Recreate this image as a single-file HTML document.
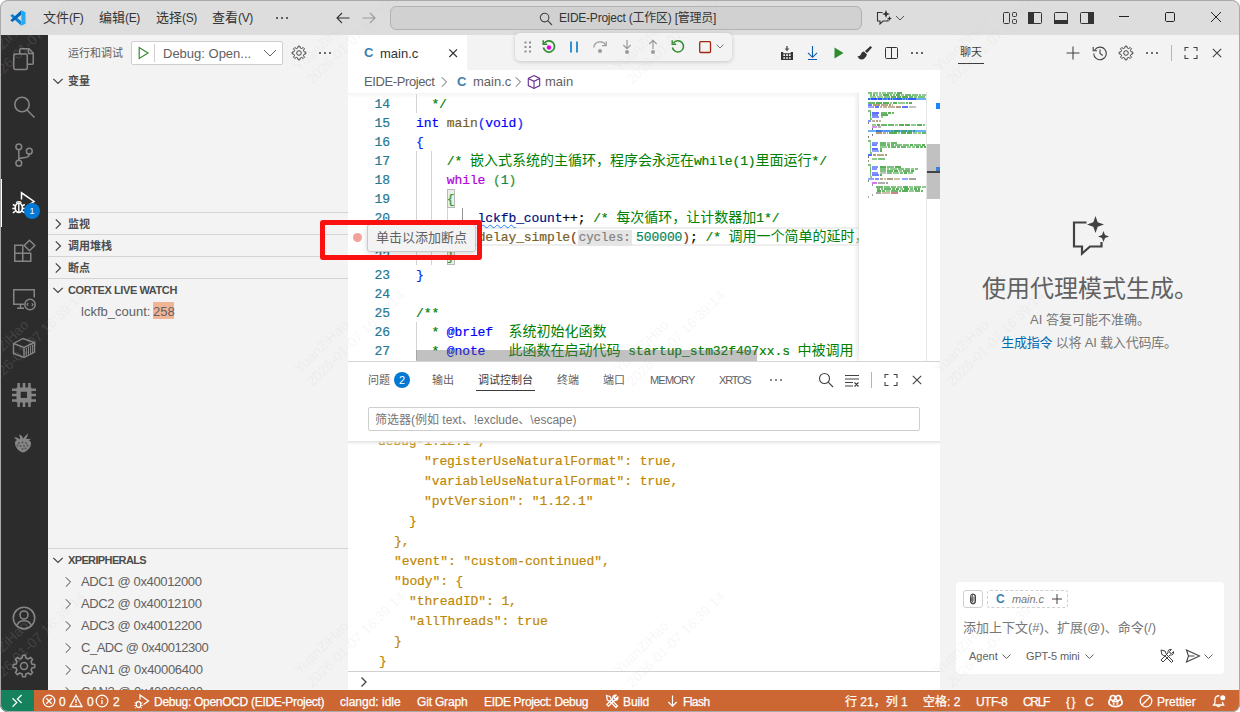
<!DOCTYPE html>
<html lang="zh-CN">
<head>
<meta charset="utf-8">
<title>EIDE-Project</title>
<style>
*{box-sizing:border-box;margin:0;padding:0}
html,body{width:1240px;height:712px;overflow:hidden;background:#fff}
body{font-family:"Liberation Sans","Noto Sans CJK SC",sans-serif;font-size:13px;color:#616161;position:relative}
.abs{position:absolute}
#win{position:absolute;left:0;top:0;width:1240px;height:712px;border-radius:8px;overflow:hidden;background:#dddddd}
#winborder{position:absolute;left:0;top:0;width:1240px;height:712px;border-radius:8px;border:1px solid #a9a9a9;z-index:50;pointer-events:none}
svg{display:block;overflow:visible}
.ic{position:absolute}
.t{position:absolute;white-space:nowrap;line-height:1}
.wm{position:absolute;font-size:14px;line-height:18px;color:rgba(202,202,202,.16);white-space:nowrap;transform-origin:0 0;transform:translateY(-18px) rotate(-44deg)}
/* title bar */
#title{left:0;top:0;width:1240px;height:35px;background:#dddddd}
#title .m{top:11px;font-size:13px;color:#333}
#cmd{left:390px;top:6px;width:472px;height:24px;border-radius:6px;background:#d1d1d1;border:1px solid #b2b2b2}
.l{font-size:12px;letter-spacing:-.35px}
/* activity bar */
#act{left:0;top:35px;width:48px;height:655px;background:#2c2c2c}
/* sidebar */
#side{left:48px;top:35px;width:300px;height:655px;background:#f3f3f3}
.hdr{position:absolute;left:0;width:300px;height:22px;border-top:1px solid #d4d4d4}
.hdr .t{left:20px;top:6px;font-size:11px;font-weight:bold;color:#4d4d4d}
.row{position:absolute;left:0;width:300px;height:22px}
.row .t{top:4px;font-size:13px;color:#616161}
/* editor */
#ed{left:348px;top:35px;width:592px;height:327px;background:#fff}
#tabs{left:0;top:0;width:592px;height:35px;background:#f3f3f3}
#tab{left:0;top:0;width:119px;height:35px;background:#fff}
#crumbs{left:0;top:35px;width:592px;height:22px;background:#fff}
#code{left:0;top:57px;width:592px;height:270px;background:#fff;overflow:hidden}
.ln{position:absolute;left:0;width:42px;text-align:right;font-family:"Liberation Mono",monospace;font-size:13px;letter-spacing:-0.1px;color:#237893;line-height:19px;height:19px}
.cl{position:absolute;left:68px;font-family:"Liberation Mono","Noto Sans CJK SC",monospace;font-size:13px;letter-spacing:-0.1px;color:#000;line-height:19px;height:19px;white-space:pre}
.cl .cj{font-size:14px;letter-spacing:0;-webkit-text-stroke:0}
.cl,.ln,.con{-webkit-text-stroke:.2px}
.cm{color:#008000}.kw{color:#0000ff}.fn{color:#795e26}.ct{color:#af00db}.nu{color:#098658}.vr{color:#001080}.b1{color:#0431fa}.b2{color:#319331}.b3{color:#7b3814}
.hint{font-size:12.400px;letter-spacing:0;font-family:"Liberation Mono",monospace;background:#e5e5e5;color:#828282;padding:1px 1px 1px 1px;margin-right:4.300px}
.hl{background:transparent}
.bm{}
.sq{text-decoration:underline wavy #1a85ff;text-decoration-thickness:1px;text-underline-offset:2px}
/* panel */
#panel{left:348px;top:361px;width:592px;height:329px;background:#fff;border-top:1px solid #d4d4d4}
.con{position:absolute;font-family:"Liberation Mono",monospace;font-size:13px;letter-spacing:-0.1px;color:#bf8803;line-height:20px;white-space:pre}
/* chat */
#chat{left:940px;top:35px;width:300px;height:655px;background:#f3f3f3}
/* status */
#status{left:0;top:690px;width:1240px;height:22px;background:#cc6633;color:#fff}
#status .t{top:6px;font-size:12px;color:#fff;-webkit-text-stroke:.25px #fff}
</style>
</head>
<body>
<div id="win">
<!-- TITLE BAR -->
<div id="title" class="abs">
  <svg class="ic" style="left:10px;top:10px" width="16" height="16" viewBox="0 0 100 100"><path d="M71 98 L71 70 L15 25 L2 36 Z" fill="#0a84d8"/><path d="M71 2 L71 30 L15 75 L2 64 Z" fill="#0066b8"/><path d="M71 2 L97 14 V86 L71 98 Z" fill="#23a9f2"/></svg>
  <span class="t m" style="left:43px">文件<span class="l">(F)</span></span>
  <span class="t m" style="left:99px">编辑<span class="l">(E)</span></span>
  <span class="t m" style="left:156px">选择<span class="l">(S)</span></span>
  <span class="t m" style="left:212px">查看<span class="l">(V)</span></span>
  <svg class="ic" style="left:274px;top:10px" width="16" height="16" viewBox="0 0 16 16" fill="#333"><circle cx="3" cy="8" r="1"/><circle cx="8" cy="8" r="1"/><circle cx="13" cy="8" r="1"/></svg>
  <svg class="ic" style="left:335px;top:10px" width="16" height="16" viewBox="0 0 16 16" fill="none" stroke="#333" stroke-width="1.1"><path d="M14.5 8H2M7 3L2 8l5 5"/></svg>
  <svg class="ic" style="left:361px;top:10px" width="16" height="16" viewBox="0 0 16 16" fill="none" stroke="#9a9a9a" stroke-width="1.1"><path d="M1.5 8H14M9 3l5 5-5 5"/></svg>
  <div id="cmd" class="abs"></div>
  <svg class="ic" style="left:539px;top:12px" width="14" height="14" viewBox="0 0 14 14" fill="none" stroke="#444" stroke-width="1.1"><circle cx="5.6" cy="5.6" r="4.3"/><path d="M8.7 8.7L13 13"/></svg>
  <span class="t" style="left:559px;top:12px;font-size:12px;color:#333;letter-spacing:-0.23px">EIDE-Project (工作区) [管理员]</span>
  <svg class="ic" style="left:876px;top:10px" width="16" height="16" viewBox="0 0 16 16" fill="none" stroke="#333" stroke-width="1.100"><path d="M6.500 2.500H1.500v8.500h2.500v3l3-3h5V9.500"/><path d="M10 0l1.100 2.900 2.900 1.100-2.900 1.100L10 8 8.900 5.100 6 4l2.900-1.100z M13.500 6l.7 1.800 1.800.7-1.800.7-.7 1.800-.7-1.800-1.800-.7 1.800-.7z" fill="#333" stroke="none"/></svg>
  <svg class="ic" style="left:895px;top:13px" width="10" height="10" viewBox="0 0 10 10" fill="none" stroke="#555" stroke-width="1"><path d="M1 3l4 4 4-4"/></svg>
  <svg class="ic" style="left:1002px;top:10px" width="16" height="16" viewBox="0 0 16 16" fill="none" stroke="#333" stroke-width="1"><rect x="1.500" y="2.500" width="6" height="11" rx="1"/><rect x="10.500" y="2.500" width="4" height="4" rx="1"/><rect x="10.500" y="9.500" width="4" height="4" rx="1"/></svg>
  <svg class="ic" style="left:1027px;top:10px" width="16" height="16" viewBox="0 0 16 16"><rect x="1.500" y="2.500" width="13" height="11" rx="1" fill="none" stroke="#333"/><rect x="1" y="2" width="6" height="12" fill="#333"/></svg>
  <svg class="ic" style="left:1053px;top:10px" width="16" height="16" viewBox="0 0 16 16"><rect x="1.500" y="2.500" width="13" height="11" rx="1" fill="none" stroke="#333"/><rect x="1" y="10" width="14" height="4" fill="#333"/></svg>
  <svg class="ic" style="left:1079px;top:10px" width="16" height="16" viewBox="0 0 16 16"><rect x="1.500" y="2.500" width="13" height="11" rx="1" fill="none" stroke="#333"/><rect x="9" y="2" width="6" height="12" fill="#333"/></svg>
  <svg class="ic" style="left:1119px;top:12px" width="10" height="10" viewBox="0 0 10 10" stroke="#222" stroke-width="1" fill="none"><path d="M0 4.500h10"/></svg>
  <svg class="ic" style="left:1165px;top:12px" width="10" height="10" viewBox="0 0 10 10" stroke="#222" stroke-width="1" fill="none"><rect x=".5" y=".5" width="9" height="9" rx="1.200"/></svg>
  <svg class="ic" style="left:1211px;top:12px" width="10" height="10" viewBox="0 0 10 10" stroke="#222" stroke-width="1" fill="none"><path d="M0 0l10 10M10 0L0 10"/></svg>
</div>
<!-- ACTIVITY BAR -->
<div id="act" class="abs">
  <div class="abs" style="left:0;top:144px;width:2px;height:48px;background:#fff"></div>
  <svg class="ic" style="left:12px;top:12px" width="24" height="24" viewBox="0 0 24 24" fill="none" stroke="#858585" stroke-width="1.5"><path d="M7.750 6.500V2.750a1 1 0 0 1 1-1h8.200l4.300 4.300v10.200a1 1 0 0 1-1 1H16"/><path d="M16.500 1.750v4.800h4.700"/><rect x="1.750" y="7" width="13.500" height="15.500" rx="1.500"/></svg>
  <svg class="ic" style="left:12px;top:60px" width="24" height="24" viewBox="0 0 24 24" fill="none" stroke="#858585" stroke-width="1.600"><circle cx="10" cy="9.500" r="7.200"/><path d="M15 15l7.500 7.500"/></svg>
  <svg class="ic" style="left:12px;top:108px" width="24" height="24" viewBox="0 0 24 24" fill="none" stroke="#858585" stroke-width="1.500"><circle cx="6.800" cy="3.800" r="2.900"/><circle cx="6.800" cy="20.200" r="2.900"/><circle cx="17.300" cy="8.200" r="2.900"/><path d="M6.800 6.700v10.600M17.300 11.100c0 3.500-3 3.600-6 3.600-2.500 0-4.500 1-4.500 2.600"/></svg>
  <svg class="ic" style="left:12px;top:156px" width="24" height="24" viewBox="0 0 24 24" fill="none" stroke="#fff" stroke-width="1.500"><path d="M9.500 8.500V1.800l12.500 8.700-7.500 5.200"/><ellipse cx="6.800" cy="16.800" rx="3.600" ry="4.700" stroke-width="1.700"/><path d="M6.800 12.500v9M.8 13.500l2.700 1.300M12.800 13.500l-2.700 1.300M.3 17.500h3M13.300 17.500h-3M.8 21.800l2.700-1.600M12.800 21.800l-2.700-1.600M4.300 11.800c.5-1.600 4.500-1.600 5 0" stroke-width="1.400"/></svg>
  <div class="abs" style="left:24px;top:168px;width:16px;height:16px;border-radius:8px;background:#0078d4;color:#fff;font-size:9px;text-align:center;line-height:16px">1</div>
  <svg class="ic" style="left:12px;top:204px" width="24" height="24" viewBox="0 0 24 24" fill="none" stroke="#858585" stroke-width="1.500"><path d="M2.750 6.250h8v8h-8zM2.750 14.250h8v8h-8zM10.750 14.250h8v8h-8z"/><path d="M17.500 1.200l5.300 5.300-5.300 5.300-5.300-5.300z"/></svg>
  <svg class="ic" style="left:12px;top:252px" width="24" height="24" viewBox="0 0 24 24" fill="none" stroke="#858585" stroke-width="1.500"><path d="M12 17.250H1.750V2.750h20.500V10.500"/><path d="M5 21.250h7M8.500 17.500v3.500"/><circle cx="18" cy="17.500" r="5.200"/><path d="M16.300 15.800l-1.400 1.500 1.400 1.500M19.700 16.200l1.400 1.500-1.400 1.500" stroke-width="1.100"/></svg>
  <svg class="ic" style="left:12px;top:300px" width="24" height="24" viewBox="0 0 24 24" fill="none" stroke="#858585" stroke-width="1.400"><path d="M1.500 8.500L11 3.500l11.500 4v9.500L12 22.500l-10.500-4z"/><path d="M1.500 8.500L12 12.500l10.500-5M12 12.500v10"/><path d="M14.300 12.800v8M16.500 11.800v8M18.600 10.900v8M20.600 10v8" stroke-width="1"/></svg>
  <svg class="ic" style="left:12px;top:348px" width="24" height="24" viewBox="0 0 24 24" fill="#858585"><path d="M4.500 4.500h15v15h-15z M8.700 8.700v6.300h6.300V8.700z" fill-rule="evenodd"/><path d="M5.400 0h2.500v5h-2.500zM10.700 0h2.600v5h-2.600zM16.200 0h2.500v5h-2.500zM5.400 19h2.500v5h-2.500zM10.700 19h2.600v5h-2.600zM16.200 19h2.500v5h-2.500zM0 5.400h5v2.500H0zM0 10.700h5v2.600H0zM0 16.200h5v2.500H0zM19 5.400h5v2.500h-5zM19 10.700h5v2.600h-5zM19 16.200h5v2.500h-5z"/></svg>
  <svg class="ic" style="left:13px;top:398px" width="20" height="20" viewBox="0 0 20 20" fill="#858585"><path d="M1 4.500c2.500-.3 4.500.3 6 2-.2-2 .3-3.500-1.300-5C8.500 2 9.800 3.500 10 5.800 11.200 4 12.800 2.500 14.800.5c.2 2-.6 3.800-2.300 5.400 2-.3 3.500 0 5.500.6-1.500.8-3 1.500-5 1.500H6.500C4.500 7.500 2.500 6.500 1 4.500z"/><path d="M2.500 8c2-1.600 4.500-1.800 7-1.500 3-.4 6 0 8 2 1.200 2.500.3 5.200-1.800 7.500-1.800 1.800-3.500 2.800-5.700 3.500-2.500-.6-4.500-2-6-4C2 13 1.500 10.200 2.500 8z"/><g fill="#2c2c2c" opacity=".55"><circle cx="6" cy="10" r=".9"/><circle cx="9.500" cy="9.500" r=".9"/><circle cx="13" cy="10" r=".9"/><circle cx="7.500" cy="13" r=".9"/><circle cx="11" cy="13" r=".9"/><circle cx="14.500" cy="12.500" r=".9"/><circle cx="9.500" cy="16" r=".9"/><circle cx="12.500" cy="15.500" r=".9"/><circle cx="4.500" cy="12.500" r=".9"/></g></svg>
  <svg class="ic" style="left:12px;top:571px" width="24" height="24" viewBox="0 0 24 24" fill="none" stroke="#858585" stroke-width="1.600"><circle cx="12" cy="12" r="10.700"/><circle cx="12" cy="9" r="4"/><path d="M4.800 19.500c1.200-3.300 4-4.800 7.200-4.800s6 1.500 7.200 4.800"/></svg>
  <svg class="ic" style="left:12px;top:619px" width="24" height="24" viewBox="0 0 24 24" fill="none" stroke="#858585" stroke-width="1.600" stroke-linejoin="round"><path d="M10.090 4.030 L10.560 1.300 L13.440 1.300 L13.910 4.030 L16.280 5.010 L18.550 3.410 L20.590 5.450 L18.990 7.720 L19.970 10.090 L22.700 10.560 L22.700 13.440 L19.970 13.910 L18.990 16.280 L20.590 18.550 L18.550 20.590 L16.280 18.990 L13.910 19.970 L13.440 22.700 L10.560 22.700 L10.090 19.970 L7.720 18.990 L5.450 20.590 L3.410 18.550 L5.010 16.280 L4.030 13.910 L1.300 13.440 L1.300 10.560 L4.030 10.090 L5.010 7.720 L3.410 5.450 L5.450 3.410 L7.720 5.010Z"/><circle cx="12" cy="12" r="3.500"/></svg>
</div>
<!-- SIDEBAR -->
<div id="side" class="abs">
  <span class="t" style="left:20px;top:13px;font-size:11px;color:#616161">运行和调试</span>
  <div class="abs" style="left:83px;top:6px;width:152px;height:24px;background:#fff;border:1px solid #cecece;border-radius:2px"></div>
  <svg class="ic" style="left:87px;top:10px" width="16" height="16" viewBox="0 0 16 16" fill="none" stroke="#388a34" stroke-width="1.200"><path d="M4.200 2.500v11L13 8z"/></svg>
  <div class="abs" style="left:106px;top:9px;width:1px;height:18px;background:#d0d0d0"></div>
  <span class="t" style="left:115px;top:12px;font-size:13px;color:#616161">Debug: Open...</span>
  <svg class="ic" style="left:214px;top:10px" width="16" height="16" viewBox="0 0 16 16" fill="none" stroke="#616161" stroke-width="1"><path d="M2 5l6 6 6-6"/></svg>
  <svg class="ic" style="left:243px;top:10px" width="16" height="16" viewBox="0 0 16 16" fill="none" stroke="#424242" stroke-width="1" stroke-linejoin="round"><path d="M6.790 2.940 L7.080 1.160 L8.920 1.160 L9.210 2.940 L10.720 3.570 L12.190 2.510 L13.490 3.810 L12.430 5.280 L13.060 6.790 L14.840 7.080 L14.840 8.920 L13.060 9.210 L12.430 10.720 L13.490 12.190 L12.190 13.490 L10.720 12.430 L9.210 13.060 L8.920 14.840 L7.080 14.840 L6.790 13.060 L5.280 12.430 L3.810 13.490 L2.510 12.190 L3.570 10.720 L2.940 9.210 L1.160 8.920 L1.160 7.080 L2.940 6.790 L3.570 5.280 L2.510 3.810 L3.810 2.510 L5.280 3.570Z"/><circle cx="8" cy="8" r="2.300"/></svg>
  <svg class="ic" style="left:269px;top:10px" width="16" height="16" viewBox="0 0 16 16" fill="#424242"><circle cx="3" cy="8" r="1"/><circle cx="8" cy="8" r="1"/><circle cx="13" cy="8" r="1"/></svg>
  <div class="hdr" style="top:35px;border-top:none;"><svg class="ic" style="left:2px;top:3px" width="16" height="16" viewBox="0 0 16 16" fill="none" stroke="#424242" stroke-width="1.200"><path d="M3.300 5.800L8 10.500l4.700-4.700"/></svg><span class="t">变量</span></div>
  <div class="hdr" style="top:177px;"><svg class="ic" style="left:2px;top:3px" width="16" height="16" viewBox="0 0 16 16" fill="none" stroke="#424242" stroke-width="1.200"><path d="M5.800 3.300L10.500 8l-4.700 4.700"/></svg><span class="t">监视</span></div>
  <div class="hdr" style="top:199px;"><svg class="ic" style="left:2px;top:3px" width="16" height="16" viewBox="0 0 16 16" fill="none" stroke="#424242" stroke-width="1.200"><path d="M5.800 3.300L10.500 8l-4.700 4.700"/></svg><span class="t">调用堆栈</span></div>
  <div class="hdr" style="top:221px;"><svg class="ic" style="left:2px;top:3px" width="16" height="16" viewBox="0 0 16 16" fill="none" stroke="#424242" stroke-width="1.200"><path d="M5.800 3.300L10.500 8l-4.700 4.700"/></svg><span class="t">断点</span></div>
  <div class="hdr" style="top:243px;"><svg class="ic" style="left:2px;top:3px" width="16" height="16" viewBox="0 0 16 16" fill="none" stroke="#424242" stroke-width="1.200"><path d="M3.300 5.800L8 10.500l4.700-4.700"/></svg><span class="t" style="letter-spacing:-0.41px">CORTEX LIVE WATCH</span></div>
  <div class="row" style="top:266px"><span class="t" style="left:33px">lckfb_count:</span><span class="abs" style="left:105px;top:1px;width:21px;height:17px;background:#f1b596"></span><span class="t" style="left:105px">258</span></div>
  <div class="hdr" style="top:513px;"><svg class="ic" style="left:2px;top:3px" width="16" height="16" viewBox="0 0 16 16" fill="none" stroke="#424242" stroke-width="1.200"><path d="M3.300 5.800L8 10.500l4.700-4.700"/></svg><span class="t" style="letter-spacing:-0.63px">XPERIPHERALS</span></div>
  <div class="row" style="top:536px"><svg class="ic" style="left:12px;top:3px" width="16" height="16" viewBox="0 0 16 16" fill="none" stroke="#424242" stroke-width="1"><path d="M5.800 3.300L10.500 8l-4.700 4.700"/></svg><span class="t" style="left:33px;letter-spacing:-0.36px">ADC1 @ 0x40012000</span></div>
  <div class="row" style="top:558px"><svg class="ic" style="left:12px;top:3px" width="16" height="16" viewBox="0 0 16 16" fill="none" stroke="#424242" stroke-width="1"><path d="M5.800 3.300L10.500 8l-4.700 4.700"/></svg><span class="t" style="left:33px;letter-spacing:-0.36px">ADC2 @ 0x40012100</span></div>
  <div class="row" style="top:580px"><svg class="ic" style="left:12px;top:3px" width="16" height="16" viewBox="0 0 16 16" fill="none" stroke="#424242" stroke-width="1"><path d="M5.800 3.300L10.500 8l-4.700 4.700"/></svg><span class="t" style="left:33px;letter-spacing:-0.36px">ADC3 @ 0x40012200</span></div>
  <div class="row" style="top:602px"><svg class="ic" style="left:12px;top:3px" width="16" height="16" viewBox="0 0 16 16" fill="none" stroke="#424242" stroke-width="1"><path d="M5.800 3.300L10.500 8l-4.700 4.700"/></svg><span class="t" style="left:33px;letter-spacing:-0.49px">C_ADC @ 0x40012300</span></div>
  <div class="row" style="top:624px"><svg class="ic" style="left:12px;top:3px" width="16" height="16" viewBox="0 0 16 16" fill="none" stroke="#424242" stroke-width="1"><path d="M5.800 3.300L10.500 8l-4.700 4.700"/></svg><span class="t" style="left:33px;letter-spacing:-0.30px">CAN1 @ 0x40006400</span></div>
  <div class="row" style="top:646px"><svg class="ic" style="left:12px;top:3px" width="16" height="16" viewBox="0 0 16 16" fill="none" stroke="#424242" stroke-width="1"><path d="M5.800 3.300L10.500 8l-4.700 4.700"/></svg><span class="t" style="left:33px;letter-spacing:-0.30px">CAN2 @ 0x40006800</span></div>
  
</div>
<!-- EDITOR -->
<div id="ed" class="abs">
  <div id="tabs" class="abs"><div id="tab" class="abs"></div>
    <span class="t" style="left:16px;top:11px;font-size:13px;font-weight:bold;color:#3c7fb0">C</span>
    <span class="t" style="left:32px;top:12px;font-size:13px;color:#333">main.c</span>
    <svg class="ic" style="left:97px;top:10px" width="16" height="16" viewBox="0 0 16 16" fill="none" stroke="#333" stroke-width="1.200"><path d="M4.300 4.300l7.700 7.700M12 4.300l-7.700 7.700"/></svg>
  </div>
  <div id="crumbs" class="abs">
    <span class="t" style="left:16px;top:5px;font-size:13px;color:#616161;letter-spacing:-0.39px">EIDE-Project</span>
    <svg class="ic" style="left:88px;top:4px" width="16" height="16" viewBox="0 0 16 16" fill="none" stroke="#616161" stroke-width="1"><path d="M5.800 3.300L10.500 8l-4.700 4.700"/></svg>
    <span class="t" style="left:109px;top:5px;font-size:13px;font-weight:bold;color:#3c7fb0">C</span>
    <span class="t" style="left:125px;top:5px;font-size:13px;color:#616161">main.c</span>
    <svg class="ic" style="left:162px;top:4px" width="16" height="16" viewBox="0 0 16 16" fill="none" stroke="#616161" stroke-width="1"><path d="M5.800 3.300L10.500 8l-4.700 4.700"/></svg>
    <svg class="ic" style="left:178px;top:4px" width="16" height="16" viewBox="0 0 16 16" fill="none" stroke="#652d90" stroke-width="1.100"><path d="M8 1.500l5.700 2.900v7.200L8 14.500l-5.700-2.900V4.400z"/><path d="M2.300 4.400L8 7.300l5.700-2.900M8 7.300v7.200"/></svg>
    <span class="t" style="left:197px;top:5px;font-size:13px;color:#616161">main</span>
  </div>
  <div id="code" class="abs">
  <div class="abs" style="left:68px;top:135px;width:444px;height:19px;border:2px solid #eeeeee"></div>
  <div class="abs" style="left:68px;top:2px;width:1px;height:19px;background:#d3d3d3"></div><div class="abs" style="left:68px;top:59px;width:1px;height:114px;background:#d3d3d3"></div><div class="abs" style="left:83px;top:59px;width:1px;height:114px;background:#d3d3d3"></div><div class="abs" style="left:99px;top:116px;width:1px;height:38px;background:#d3d3d3"></div><div class="abs" style="left:114px;top:116px;width:1px;height:38px;background:#939393"></div><div class="abs" style="left:68px;top:230px;width:1px;height:38px;background:#d3d3d3"></div>
  <div class="abs" style="left:99px;top:97px;width:8px;height:19px;border:1px solid #b9b9b9;background:#e6f0e6"></div><div class="abs" style="left:99px;top:154px;width:8px;height:19px;border:1px solid #b9b9b9;background:#e6f0e6"></div>
  <div class="ln" style="top:3px">14</div><div class="cl" style="top:3px">  <span class="cm">*/</span></div>
  <div class="ln" style="top:22px">15</div><div class="cl" style="top:22px"><span class="kw">int</span> <span class="fn">main</span><span class="b1">(</span><span class="kw">void</span><span class="b1">)</span></div>
  <div class="ln" style="top:41px">16</div><div class="cl" style="top:41px"><span class="b1">{</span></div>
  <div class="ln" style="top:60px">17</div><div class="cl" style="top:60px">    <span class="cm">/* <span class="cj">嵌入式系统的主循环，程序会永远在</span>while(1)<span class="cj">里面运行</span>*/</span></div>
  <div class="ln" style="top:79px">18</div><div class="cl" style="top:79px">    <span class="ct">while</span> <span class="b2">(</span><span class="nu">1</span><span class="b2">)</span></div>
  <div class="ln" style="top:98px">19</div><div class="cl" style="top:98px">    <span class="b2 bm">{</span></div>
  <div class="ln" style="top:117px">20</div><div class="cl" style="top:117px">        <span class="vr sq">lckfb</span><span class="vr">_count</span>++; <span class="cm">/* <span class="cj">每次循环，让计数器加</span>1*/</span></div>
  <div class="ln" style="top:136px">21</div><div class="cl" style="top:136px">        <span class="fn">delay_simple</span><span class="b3">(</span><span class="hint">cycles:</span><span class="nu hl">500000</span><span class="b3">)</span>; <span class="cm">/* <span class="cj">调用一个简单的延时，避免计数太快</span> */</span></div>
  <div class="ln" style="top:155px">22</div><div class="cl" style="top:155px">    <span class="b2 bm">}</span></div>
  <div class="ln" style="top:174px">23</div><div class="cl" style="top:174px"><span class="b1">}</span></div>
  <div class="ln" style="top:193px">24</div><div class="cl" style="top:193px"></div>
  <div class="ln" style="top:212px">25</div><div class="cl" style="top:212px"><span class="cm">/**</span></div>
  <div class="ln" style="top:231px">26</div><div class="cl" style="top:231px"><span class="cm">  * </span><span class="kw">@brief</span><span class="cm">  <span class="cj">系统初始化函数</span></span></div>
  <div class="ln" style="top:250px">27</div><div class="cl" style="top:250px"><span class="cm">  * </span><span class="kw">@note</span><span class="cm">   <span class="cj">此函数在启动代码</span> startup_stm32f407xx.s <span class="cj">中被调用</span></span></div>
  
  <div class="abs" style="left:0;top:1px;width:592px;height:5px;background:linear-gradient(#dddddd55,#dddddd00)"></div>
  <div class="abs" style="left:68px;top:258px;width:341px;height:12px;background:rgba(100,100,100,.4)"></div>
  <div id="mini" class="abs" style="left:511px;top:0;width:81px;height:270px;background:#fff;box-shadow:-3px 0 5px -2px #ddd">
    <svg class="ic" style="left:9px;top:0" width="59" height="120" viewBox="0 0 59 120"><rect x="0" y="6" width="59" height="2" fill="#6cb0f7"/><rect x="0" y="38" width="59" height="2" fill="#6cb0f7"/><rect x="0" y="0.2" width="4" height="1.600" fill="#0a8a0a" opacity="0.65"/><rect x="5" y="0.2" width="5" height="1.600" fill="#0a8a0a" opacity="0.55"/><rect x="11" y="0.2" width="2" height="1.600" fill="#0a8a0a" opacity="0.55"/><rect x="14" y="0.2" width="4" height="1.600" fill="#0a8a0a" opacity="0.55"/><rect x="19" y="0.2" width="6" height="1.600" fill="#0a8a0a" opacity="0.65"/><rect x="26" y="0.2" width="2" height="1.600" fill="#0a8a0a" opacity="0.55"/><rect x="29" y="0.2" width="5" height="1.600" fill="#0a8a0a" opacity="0.85"/><rect x="2" y="2.2" width="2" height="1.600" fill="#0a8a0a" opacity="0.65"/><rect x="5" y="2.2" width="2" height="1.600" fill="#0a8a0a" opacity="0.85"/><rect x="8" y="2.2" width="2" height="1.600" fill="#0a8a0a" opacity="0.55"/><rect x="11" y="2.2" width="3" height="1.600" fill="#0a8a0a" opacity="0.55"/><rect x="15" y="2.2" width="6" height="1.600" fill="#0a8a0a" opacity="0.85"/><rect x="22" y="2.2" width="2" height="1.600" fill="#0a8a0a" opacity="0.65"/><rect x="25" y="2.2" width="2" height="1.600" fill="#0a8a0a" opacity="0.65"/><rect x="28" y="2.2" width="4" height="1.600" fill="#0a8a0a" opacity="0.85"/><rect x="33" y="2.2" width="3" height="1.600" fill="#0a8a0a" opacity="0.55"/><rect x="37" y="2.2" width="6" height="1.600" fill="#0a8a0a" opacity="0.75"/><rect x="44" y="2.2" width="6" height="1.600" fill="#0a8a0a" opacity="0.65"/><rect x="51" y="2.2" width="2" height="1.600" fill="#0a8a0a" opacity="0.65"/><rect x="54" y="2.2" width="4" height="1.600" fill="#0a8a0a" opacity="0.55"/><rect x="2" y="4.2" width="6" height="1.600" fill="#0a8a0a" opacity="0.55"/><rect x="9" y="4.2" width="6" height="1.600" fill="#0a8a0a" opacity="0.55"/><rect x="16" y="4.2" width="6" height="1.600" fill="#0a8a0a" opacity="0.65"/><rect x="23" y="4.2" width="5" height="1.600" fill="#0a8a0a" opacity="0.85"/><rect x="29" y="4.2" width="4" height="1.600" fill="#0a8a0a" opacity="0.85"/><rect x="34" y="4.2" width="6" height="1.600" fill="#0a8a0a" opacity="0.85"/><rect x="41" y="4.2" width="4" height="1.600" fill="#0a8a0a" opacity="0.75"/><rect x="46" y="4.2" width="3" height="1.600" fill="#0a8a0a" opacity="0.65"/><rect x="50" y="4.2" width="7" height="1.600" fill="#0a8a0a" opacity="0.65"/><rect x="0" y="6.2" width="2" height="1.600" fill="#1030ff" opacity="0.75"/><rect x="3" y="6.2" width="6" height="1.600" fill="#1030ff" opacity="0.85"/><rect x="10" y="6.2" width="4" height="1.600" fill="#1030ff" opacity="0.85"/><rect x="15" y="6.2" width="4" height="1.600" fill="#1030ff" opacity="0.55"/><rect x="20" y="6.2" width="2" height="1.600" fill="#1030ff" opacity="0.85"/><rect x="23" y="6.2" width="1" height="1.600" fill="#1030ff" opacity="0.75"/><rect x="25" y="6.2" width="4" height="1.600" fill="#1030ff" opacity="0.65"/><rect x="29" y="6.2" width="5" height="1.600" fill="#0b3fd8" opacity="0.85"/><rect x="35" y="6.2" width="2" height="1.600" fill="#0b3fd8" opacity="0.55"/><rect x="38" y="6.2" width="1" height="1.600" fill="#0b3fd8" opacity="0.75"/><rect x="40" y="6.2" width="8" height="1.600" fill="#1030ff" opacity="0.75"/><rect x="0" y="10.2" width="7" height="1.600" fill="#0a8a0a" opacity="0.75"/><rect x="8" y="10.2" width="6" height="1.600" fill="#0a8a0a" opacity="0.85"/><rect x="15" y="10.2" width="6" height="1.600" fill="#0a8a0a" opacity="0.85"/><rect x="22" y="10.2" width="2" height="1.600" fill="#0a8a0a" opacity="0.55"/><rect x="25" y="10.2" width="4" height="1.600" fill="#0a8a0a" opacity="0.85"/><rect x="30" y="10.2" width="7" height="1.600" fill="#0a8a0a" opacity="0.55"/><rect x="38" y="10.2" width="2" height="1.600" fill="#0a8a0a" opacity="0.75"/><rect x="41" y="10.2" width="3" height="1.600" fill="#0a8a0a" opacity="0.85"/><rect x="0" y="12.2" width="4" height="1.600" fill="#1030ff" opacity="0.75"/><rect x="5" y="12.2" width="7" height="1.600" fill="#8a6d3b" opacity="0.85"/><rect x="13" y="12.2" width="7" height="1.600" fill="#8a6d3b" opacity="0.75"/><rect x="21" y="12.2" width="2" height="1.600" fill="#8a6d3b" opacity="0.85"/><rect x="24" y="12.2" width="1" height="1.600" fill="#8a6d3b" opacity="0.65"/><rect x="0" y="14.2" width="6" height="1.600" fill="#1030ff" opacity="0.55"/><rect x="7" y="14.2" width="4" height="1.600" fill="#1030ff" opacity="0.85"/><rect x="12" y="14.2" width="2" height="1.600" fill="#8a6d3b" opacity="0.65"/><rect x="15" y="14.2" width="4" height="1.600" fill="#8a6d3b" opacity="0.65"/><rect x="20" y="14.2" width="7" height="1.600" fill="#8a6d3b" opacity="0.65"/><rect x="28" y="14.2" width="5" height="1.600" fill="#8a6d3b" opacity="0.85"/><rect x="34" y="14.2" width="6" height="1.600" fill="#1030ff" opacity="0.85"/><rect x="41" y="14.2" width="7" height="1.600" fill="#777" opacity="0.55"/><rect x="0" y="18.2" width="3" height="1.600" fill="#0a8a0a" opacity="0.65"/><rect x="2" y="20.2" width="1" height="1.600" fill="#0a8a0a" opacity="0.85"/><rect x="4" y="20.2" width="7" height="1.600" fill="#1030ff" opacity="0.85"/><rect x="13" y="20.2" width="6" height="1.600" fill="#0a8a0a" opacity="0.75"/><rect x="20" y="20.2" width="3" height="1.600" fill="#0a8a0a" opacity="0.85"/><rect x="24" y="20.2" width="2" height="1.600" fill="#0a8a0a" opacity="0.75"/><rect x="2" y="22.2" width="1" height="1.600" fill="#0a8a0a" opacity="0.85"/><rect x="4" y="22.2" width="6" height="1.600" fill="#1030ff" opacity="0.75"/><rect x="13" y="22.2" width="7" height="1.600" fill="#0a8a0a" opacity="0.85"/><rect x="2" y="24.2" width="1" height="1.600" fill="#0a8a0a" opacity="0.65"/><rect x="4" y="24.2" width="7" height="1.600" fill="#1030ff" opacity="0.65"/><rect x="13" y="24.2" width="2" height="1.600" fill="#0a8a0a" opacity="0.55"/><rect x="2" y="26.2" width="2" height="1.600" fill="#0a8a0a" opacity="0.65"/><rect x="0" y="28.2" width="3" height="1.600" fill="#1030ff" opacity="0.65"/><rect x="4" y="28.2" width="3" height="1.600" fill="#8a6d3b" opacity="0.65"/><rect x="8" y="28.2" width="2" height="1.600" fill="#8a6d3b" opacity="0.85"/><rect x="11" y="28.2" width="2" height="1.600" fill="#8a6d3b" opacity="0.65"/><rect x="0" y="30.2" width="1" height="1.600" fill="#333" opacity="0.75"/><rect x="4" y="32.2" width="4" height="1.600" fill="#0a8a0a" opacity="0.55"/><rect x="9" y="32.2" width="3" height="1.600" fill="#0a8a0a" opacity="0.85"/><rect x="13" y="32.2" width="6" height="1.600" fill="#0a8a0a" opacity="0.75"/><rect x="20" y="32.2" width="6" height="1.600" fill="#0a8a0a" opacity="0.75"/><rect x="27" y="32.2" width="3" height="1.600" fill="#0a8a0a" opacity="0.55"/><rect x="31" y="32.2" width="5" height="1.600" fill="#0a8a0a" opacity="0.85"/><rect x="37" y="32.2" width="5" height="1.600" fill="#0a8a0a" opacity="0.85"/><rect x="43" y="32.2" width="5" height="1.600" fill="#0a8a0a" opacity="0.55"/><rect x="49" y="32.2" width="5" height="1.600" fill="#0a8a0a" opacity="0.85"/><rect x="55" y="32.2" width="2" height="1.600" fill="#0a8a0a" opacity="0.65"/><rect x="4" y="34.2" width="5" height="1.600" fill="#af00db" opacity="0.55"/><rect x="10" y="34.2" width="3" height="1.600" fill="#777" opacity="0.65"/><rect x="4" y="36.2" width="1" height="1.600" fill="#333" opacity="0.85"/><rect x="8" y="38.2" width="5" height="1.600" fill="#0b3fd8" opacity="0.65"/><rect x="13" y="38.2" width="2" height="1.600" fill="#2b6fdf" opacity="0.75"/><rect x="16" y="38.2" width="6" height="1.600" fill="#2b6fdf" opacity="0.55"/><rect x="23" y="38.2" width="2" height="1.600" fill="#0a8a0a" opacity="0.55"/><rect x="26" y="38.2" width="6" height="1.600" fill="#0a8a0a" opacity="0.65"/><rect x="33" y="38.2" width="6" height="1.600" fill="#0a8a0a" opacity="0.55"/><rect x="40" y="38.2" width="4" height="1.600" fill="#0a8a0a" opacity="0.55"/><rect x="45" y="38.2" width="2" height="1.600" fill="#0a8a0a" opacity="0.65"/><rect x="8" y="40.2" width="6" height="1.600" fill="#8a6d3b" opacity="0.85"/><rect x="15" y="40.2" width="3" height="1.600" fill="#8a6d3b" opacity="0.75"/><rect x="19" y="40.2" width="1" height="1.600" fill="#8a6d3b" opacity="0.75"/><rect x="21" y="40.2" width="8" height="1.600" fill="#0a8a0a" opacity="0.85"/><rect x="30" y="40.2" width="2" height="1.600" fill="#0a8a0a" opacity="0.55"/><rect x="33" y="40.2" width="5" height="1.600" fill="#0a8a0a" opacity="0.85"/><rect x="39" y="40.2" width="5" height="1.600" fill="#0a8a0a" opacity="0.85"/><rect x="45" y="40.2" width="4" height="1.600" fill="#0a8a0a" opacity="0.55"/><rect x="50" y="40.2" width="3" height="1.600" fill="#0a8a0a" opacity="0.55"/><rect x="54" y="40.2" width="4" height="1.600" fill="#0a8a0a" opacity="0.75"/><rect x="4" y="42.2" width="1" height="1.600" fill="#333" opacity="0.75"/><rect x="0" y="44.2" width="1" height="1.600" fill="#333" opacity="0.85"/><rect x="0" y="48.2" width="3" height="1.600" fill="#0a8a0a" opacity="0.65"/><rect x="2" y="50.2" width="1" height="1.600" fill="#0a8a0a" opacity="0.55"/><rect x="4" y="50.2" width="6" height="1.600" fill="#1030ff" opacity="0.65"/><rect x="12" y="50.2" width="6" height="1.600" fill="#0a8a0a" opacity="0.75"/><rect x="19" y="50.2" width="3" height="1.600" fill="#0a8a0a" opacity="0.55"/><rect x="23" y="50.2" width="6" height="1.600" fill="#0a8a0a" opacity="0.75"/><rect x="2" y="52.2" width="1" height="1.600" fill="#0a8a0a" opacity="0.55"/><rect x="4" y="52.2" width="5" height="1.600" fill="#1030ff" opacity="0.75"/><rect x="12" y="52.2" width="6" height="1.600" fill="#0a8a0a" opacity="0.75"/><rect x="19" y="52.2" width="3" height="1.600" fill="#0a8a0a" opacity="0.75"/><rect x="23" y="52.2" width="3" height="1.600" fill="#0a8a0a" opacity="0.75"/><rect x="27" y="52.2" width="7" height="1.600" fill="#0a8a0a" opacity="0.65"/><rect x="35" y="52.2" width="6" height="1.600" fill="#0a8a0a" opacity="0.65"/><rect x="42" y="52.2" width="3" height="1.600" fill="#0a8a0a" opacity="0.85"/><rect x="46" y="52.2" width="7" height="1.600" fill="#0a8a0a" opacity="0.65"/><rect x="54" y="52.2" width="3" height="1.600" fill="#0a8a0a" opacity="0.85"/><rect x="2" y="54.2" width="1" height="1.600" fill="#0a8a0a" opacity="0.75"/><rect x="12" y="54.2" width="7" height="1.600" fill="#0a8a0a" opacity="0.55"/><rect x="20" y="54.2" width="2" height="1.600" fill="#0a8a0a" opacity="0.75"/><rect x="23" y="54.2" width="5" height="1.600" fill="#0a8a0a" opacity="0.75"/><rect x="29" y="54.2" width="3" height="1.600" fill="#0a8a0a" opacity="0.75"/><rect x="33" y="54.2" width="5" height="1.600" fill="#0a8a0a" opacity="0.75"/><rect x="39" y="54.2" width="4" height="1.600" fill="#0a8a0a" opacity="0.55"/><rect x="44" y="54.2" width="3" height="1.600" fill="#0a8a0a" opacity="0.55"/><rect x="48" y="54.2" width="3" height="1.600" fill="#0a8a0a" opacity="0.85"/><rect x="52" y="54.2" width="3" height="1.600" fill="#0a8a0a" opacity="0.75"/><rect x="56" y="54.2" width="2" height="1.600" fill="#0a8a0a" opacity="0.85"/><rect x="2" y="56.2" width="1" height="1.600" fill="#0a8a0a" opacity="0.55"/><rect x="4" y="56.2" width="6" height="1.600" fill="#1030ff" opacity="0.85"/><rect x="12" y="56.2" width="2" height="1.600" fill="#0a8a0a" opacity="0.75"/><rect x="2" y="58.2" width="1" height="1.600" fill="#0a8a0a" opacity="0.55"/><rect x="4" y="58.2" width="7" height="1.600" fill="#1030ff" opacity="0.55"/><rect x="12" y="58.2" width="2" height="1.600" fill="#0a8a0a" opacity="0.85"/><rect x="2" y="60.2" width="2" height="1.600" fill="#0a8a0a" opacity="0.65"/><rect x="0" y="62.2" width="4" height="1.600" fill="#1030ff" opacity="0.85"/><rect x="5" y="62.2" width="3" height="1.600" fill="#8a6d3b" opacity="0.85"/><rect x="9" y="62.2" width="7" height="1.600" fill="#8a6d3b" opacity="0.75"/><rect x="17" y="62.2" width="2" height="1.600" fill="#8a6d3b" opacity="0.85"/><rect x="0" y="64.2" width="1" height="1.600" fill="#333" opacity="0.85"/><rect x="4" y="66.2" width="5" height="1.600" fill="#0a8a0a" opacity="0.55"/><rect x="10" y="66.2" width="7" height="1.600" fill="#0a8a0a" opacity="0.65"/><rect x="0" y="68.2" width="1" height="1.600" fill="#333" opacity="0.65"/><rect x="0" y="72.2" width="3" height="1.600" fill="#0a8a0a" opacity="0.65"/><rect x="2" y="74.2" width="1" height="1.600" fill="#0a8a0a" opacity="0.55"/><rect x="4" y="74.2" width="6" height="1.600" fill="#1030ff" opacity="0.65"/><rect x="12" y="74.2" width="6" height="1.600" fill="#0a8a0a" opacity="0.85"/><rect x="19" y="74.2" width="7" height="1.600" fill="#0a8a0a" opacity="0.65"/><rect x="27" y="74.2" width="6" height="1.600" fill="#0a8a0a" opacity="0.85"/><rect x="2" y="76.2" width="1" height="1.600" fill="#0a8a0a" opacity="0.75"/><rect x="4" y="76.2" width="5" height="1.600" fill="#1030ff" opacity="0.65"/><rect x="12" y="76.2" width="6" height="1.600" fill="#0a8a0a" opacity="0.65"/><rect x="19" y="76.2" width="2" height="1.600" fill="#0a8a0a" opacity="0.55"/><rect x="22" y="76.2" width="7" height="1.600" fill="#0a8a0a" opacity="0.55"/><rect x="30" y="76.2" width="6" height="1.600" fill="#0a8a0a" opacity="0.65"/><rect x="37" y="76.2" width="5" height="1.600" fill="#0a8a0a" opacity="0.65"/><rect x="43" y="76.2" width="3" height="1.600" fill="#0a8a0a" opacity="0.55"/><rect x="47" y="76.2" width="3" height="1.600" fill="#0a8a0a" opacity="0.65"/><rect x="2" y="78.2" width="1" height="1.600" fill="#0a8a0a" opacity="0.75"/><rect x="12" y="78.2" width="6" height="1.600" fill="#0a8a0a" opacity="0.65"/><rect x="19" y="78.2" width="6" height="1.600" fill="#0a8a0a" opacity="0.75"/><rect x="26" y="78.2" width="4" height="1.600" fill="#0a8a0a" opacity="0.85"/><rect x="31" y="78.2" width="3" height="1.600" fill="#0a8a0a" opacity="0.55"/><rect x="35" y="78.2" width="7" height="1.600" fill="#0a8a0a" opacity="0.75"/><rect x="43" y="78.2" width="3" height="1.600" fill="#0a8a0a" opacity="0.85"/><rect x="2" y="80.2" width="1" height="1.600" fill="#0a8a0a" opacity="0.65"/><rect x="4" y="80.2" width="6" height="1.600" fill="#1030ff" opacity="0.65"/><rect x="12" y="80.2" width="6" height="1.600" fill="#777" opacity="0.55"/><rect x="19" y="80.2" width="5" height="1.600" fill="#0a8a0a" opacity="0.65"/><rect x="25" y="80.2" width="6" height="1.600" fill="#0a8a0a" opacity="0.55"/><rect x="32" y="80.2" width="3" height="1.600" fill="#0a8a0a" opacity="0.65"/><rect x="36" y="80.2" width="3" height="1.600" fill="#0a8a0a" opacity="0.85"/><rect x="40" y="80.2" width="5" height="1.600" fill="#0a8a0a" opacity="0.55"/><rect x="2" y="82.2" width="1" height="1.600" fill="#0a8a0a" opacity="0.55"/><rect x="4" y="82.2" width="7" height="1.600" fill="#1030ff" opacity="0.75"/><rect x="12" y="82.2" width="2" height="1.600" fill="#0a8a0a" opacity="0.85"/><rect x="2" y="84.2" width="2" height="1.600" fill="#0a8a0a" opacity="0.55"/><rect x="0" y="86.2" width="6" height="1.600" fill="#1030ff" opacity="0.55"/><rect x="7" y="86.2" width="4" height="1.600" fill="#1030ff" opacity="0.65"/><rect x="12" y="86.2" width="3" height="1.600" fill="#8a6d3b" opacity="0.75"/><rect x="16" y="86.2" width="2" height="1.600" fill="#8a6d3b" opacity="0.55"/><rect x="19" y="86.2" width="6" height="1.600" fill="#8a6d3b" opacity="0.85"/><rect x="26" y="86.2" width="6" height="1.600" fill="#8a6d3b" opacity="0.55"/><rect x="34" y="86.2" width="6" height="1.600" fill="#1030ff" opacity="0.55"/><rect x="41" y="86.2" width="7" height="1.600" fill="#777" opacity="0.85"/><rect x="0" y="88.2" width="1" height="1.600" fill="#333" opacity="0.75"/><rect x="4" y="90.2" width="5" height="1.600" fill="#af00db" opacity="0.65"/><rect x="10" y="90.2" width="7" height="1.600" fill="#777" opacity="0.75"/><rect x="18" y="90.2" width="2" height="1.600" fill="#777" opacity="0.85"/><rect x="4" y="92.2" width="1" height="1.600" fill="#333" opacity="0.65"/><rect x="8" y="94.2" width="7" height="1.600" fill="#0a8a0a" opacity="0.75"/><rect x="16" y="94.2" width="6" height="1.600" fill="#0a8a0a" opacity="0.65"/><rect x="23" y="94.2" width="5" height="1.600" fill="#0a8a0a" opacity="0.65"/><rect x="29" y="94.2" width="5" height="1.600" fill="#0a8a0a" opacity="0.55"/><rect x="35" y="94.2" width="5" height="1.600" fill="#0a8a0a" opacity="0.85"/><rect x="41" y="94.2" width="4" height="1.600" fill="#0a8a0a" opacity="0.55"/><rect x="46" y="94.2" width="7" height="1.600" fill="#0a8a0a" opacity="0.65"/><rect x="54" y="94.2" width="4" height="1.600" fill="#0a8a0a" opacity="0.55"/><rect x="9" y="96.2" width="3" height="1.600" fill="#0a8a0a" opacity="0.75"/><rect x="13" y="96.2" width="2" height="1.600" fill="#0a8a0a" opacity="0.65"/><rect x="16" y="96.2" width="7" height="1.600" fill="#0a8a0a" opacity="0.75"/><rect x="24" y="96.2" width="3" height="1.600" fill="#0a8a0a" opacity="0.75"/><rect x="28" y="96.2" width="3" height="1.600" fill="#0a8a0a" opacity="0.85"/><rect x="32" y="96.2" width="3" height="1.600" fill="#0a8a0a" opacity="0.55"/><rect x="36" y="96.2" width="5" height="1.600" fill="#0a8a0a" opacity="0.85"/><rect x="42" y="96.2" width="3" height="1.600" fill="#0a8a0a" opacity="0.65"/><rect x="46" y="96.2" width="3" height="1.600" fill="#0a8a0a" opacity="0.85"/><rect x="50" y="96.2" width="2" height="1.600" fill="#0a8a0a" opacity="0.85"/><rect x="9" y="98.2" width="4" height="1.600" fill="#0a8a0a" opacity="0.85"/><rect x="14" y="98.2" width="3" height="1.600" fill="#0a8a0a" opacity="0.75"/><rect x="18" y="98.2" width="4" height="1.600" fill="#0a8a0a" opacity="0.55"/><rect x="23" y="98.2" width="7" height="1.600" fill="#0a8a0a" opacity="0.75"/><rect x="31" y="98.2" width="2" height="1.600" fill="#0a8a0a" opacity="0.75"/><rect x="34" y="98.2" width="6" height="1.600" fill="#0a8a0a" opacity="0.85"/><rect x="41" y="98.2" width="5" height="1.600" fill="#0a8a0a" opacity="0.55"/><rect x="47" y="98.2" width="5" height="1.600" fill="#0a8a0a" opacity="0.75"/><rect x="53" y="98.2" width="2" height="1.600" fill="#0a8a0a" opacity="0.75"/><rect x="8" y="100.2" width="5" height="1.600" fill="#333" opacity="0.55"/><rect x="14" y="100.2" width="8" height="1.600" fill="#8a6d3b" opacity="0.55"/><rect x="23" y="100.2" width="7" height="1.600" fill="#a31515" opacity="0.65"/><rect x="4" y="102.2" width="1" height="1.600" fill="#333" opacity="0.55"/><rect x="0" y="104.2" width="1" height="1.600" fill="#333" opacity="0.55"/></svg>
    <div class="abs" style="left:67px;top:0;width:1px;height:270px;background:#e4e4e4"></div>
    <div class="abs" style="left:68px;top:52px;width:13px;height:55px;background:#c1c1c1"></div>
    <div class="abs" style="left:77px;top:11px;width:4px;height:6px;background:#1a85ff"></div>
    <div class="abs" style="left:77px;top:75px;width:4px;height:5px;background:#3b7fd4"></div>
    <div class="abs" style="left:68px;top:79px;width:13px;height:2px;background:#424242"></div>
  </div>
  </div>
</div>
<div id="dbg" class="abs" style="left:515px;top:33px;width:217px;height:28px;background:#f3f3f3;border-radius:5px;box-shadow:0 1px 4px rgba(0,0,0,.18);z-index:20">
  <svg class="ic" style="left:5px;top:6px" width="16" height="16" viewBox="0 0 16 16" fill="#8e8e8e"><path d="M4.500 2.500h2v2h-2zM9 2.500h2v2H9zM4.500 7h2v2h-2zM9 7h2v2H9zM4.500 11.500h2v2h-2zM9 11.500h2v2H9z"/></svg>
  <svg class="ic" style="left:26px;top:6px" width="16" height="16" viewBox="0 0 16 16" fill="none" stroke="#2e8b2e" stroke-width="1.700"><path d="M3.300 4.200A5.600 5.600 0 1 1 2.400 8.500"/><path d="M2.200 1.200v4h4" stroke-width="1.500"/><circle cx="8" cy="8.500" r="2.200" fill="#e400e4" stroke="none"/></svg>
  <svg class="ic" style="left:51px;top:6px" width="16" height="16" viewBox="0 0 16 16" fill="none" stroke="#007acc" stroke-width="1.600"><path d="M5 2.500v11M11 2.500v11"/></svg>
  <svg class="ic" style="left:77px;top:6px" width="16" height="16" viewBox="0 0 16 16" fill="none" stroke="#9a9a9a" stroke-width="1.200"><path d="M1.800 8.500A6.300 6.300 0 0 1 13.800 6.500"/><path d="M14.200 2.500v4.200h-4.200"/><circle cx="8" cy="12" r="2" fill="#9a9a9a" stroke="none"/></svg>
  <svg class="ic" style="left:104px;top:6px" width="16" height="16" viewBox="0 0 16 16" fill="none" stroke="#9a9a9a" stroke-width="1.200"><path d="M8 1v8.500M4.300 6L8 9.700 11.700 6"/><circle cx="8" cy="13" r="2" fill="#9a9a9a" stroke="none"/></svg>
  <svg class="ic" style="left:130px;top:6px" width="16" height="16" viewBox="0 0 16 16" fill="none" stroke="#9a9a9a" stroke-width="1.200"><path d="M8 10V1.500M4.300 5L8 1.300 11.700 5"/><circle cx="8" cy="13" r="2" fill="#9a9a9a" stroke="none"/></svg>
  <svg class="ic" style="left:155px;top:6px" width="16" height="16" viewBox="0 0 16 16" fill="none" stroke="#2e8b2e" stroke-width="1.500"><path d="M3.300 4.200A5.600 5.600 0 1 1 2.400 8.500"/><path d="M2.200 1.200v4h4" stroke-width="1.400"/></svg>
  <svg class="ic" style="left:182px;top:6px" width="16" height="16" viewBox="0 0 16 16" fill="none" stroke="#a1260d" stroke-width="1.300"><rect x="2.700" y="2.700" width="10.800" height="10.800" rx="1"/></svg>
  <svg class="ic" style="left:200px;top:8px" width="10" height="10" viewBox="0 0 10 10" fill="none" stroke="#777" stroke-width="1"><path d="M1.500 3.500L5 7l3.500-3.500"/></svg>
</div>
<div id="eacts" class="abs" style="left:348px;top:35px;width:592px;height:35px;z-index:5">
  <svg class="ic" style="left:431px;top:10px" width="16" height="16" viewBox="0 0 16 16" fill="#333"><path d="M2 7h2.200v1.200h7.600V7H14v8H2z M4.300 9.300v1.700h1.800V9.300z M7.100 9.300v1.700h1.800V9.300z M9.900 9.300v1.700h1.800V9.300z M4.300 12.300v1.500h1.800v-1.500z M7.100 12.300v1.500h1.800v-1.500z M9.900 12.300v1.500h1.800v-1.500z" fill-rule="evenodd"/><path d="M7.300 1h1.400v2.600h1.700L8 6.300 5.600 3.600h1.700z" fill="#555"/></svg>
  <svg class="ic" style="left:457px;top:10px" width="16" height="16" viewBox="0 0 16 16" fill="none" stroke="#0b5cad" stroke-width="1.100"><path d="M7.500 1v11M3 7.800l4.500 4.500L12 7.800M3 14.500h9"/></svg>
  <svg class="ic" style="left:483px;top:10px" width="16" height="16" viewBox="0 0 16 16" fill="#2e8b2e"><path d="M3.500 2.500v11L12.500 8z"/></svg>
  <svg class="ic" style="left:509px;top:10px" width="16" height="16" viewBox="0 0 16 16" fill="#333"><path d="M13.500 1l1.500 1.500-5 5.500-2-2z"/><path d="M7 6.500l3 3c-1 3-3.500 5.500-6 5-2-.5-3-2-3.500-3.500 2 .5 3-.5 3.500-2 .5-1.500 1.500-2.500 3-2.500z"/></svg>
  <svg class="ic" style="left:536px;top:10px" width="16" height="16" viewBox="0 0 16 16" fill="none" stroke="#333" stroke-width="1"><rect x="1.500" y="2.500" width="12" height="11" rx="1"/><path d="M7.500 2.500v11"/></svg>
  <svg class="ic" style="left:561px;top:10px" width="16" height="16" viewBox="0 0 16 16" fill="#333"><circle cx="3" cy="8" r="1"/><circle cx="8" cy="8" r="1"/><circle cx="13" cy="8" r="1"/></svg>
</div>
<!-- red annotation + tooltip -->
<div class="abs" style="left:353px;top:233px;width:9px;height:9px;border-radius:5px;background:#f2a29a;z-index:21"></div>
<div class="abs" style="left:367px;top:224px;width:109px;height:28px;background:#f3f3f3;border:1px solid #c8c8c8;border-radius:3px;box-shadow:0 2px 6px rgba(0,0,0,.16);z-index:22"><span class="t" style="left:8px;top:6px;font-size:13px;color:#616161">单击以添加断点</span></div>
<div class="abs" style="left:320px;top:220px;width:162px;height:40px;border:5px solid #fb1010;border-radius:3px;z-index:23"></div>
<!-- PANEL -->
<div id="panel" class="abs">
  <span class="t" style="left:20px;top:13px;font-size:11px;color:#616161">问题</span>
  <div class="abs" style="left:46px;top:10px;width:16px;height:16px;border-radius:8px;background:#0078d4;color:#fff;font-size:11px;text-align:center;line-height:16px">2</div>
  <span class="t" style="left:84px;top:13px;font-size:11px;color:#616161">输出</span>
  <span class="t" style="left:130px;top:13px;font-size:11px;color:#3b3b3b">调试控制台</span>
  <div class="abs" style="left:128px;top:28px;width:59px;height:1px;background:#3b3b3b"></div>
  <span class="t" style="left:209px;top:13px;font-size:11px;color:#616161">终端</span>
  <span class="t" style="left:255px;top:13px;font-size:11px;color:#616161">端口</span>
  <span class="t" style="left:302px;top:13px;font-size:11px;color:#616161;letter-spacing:-0.80px">MEMORY</span>
  <span class="t" style="left:371px;top:13px;font-size:11px;color:#616161;letter-spacing:-1.20px">XRTOS</span>
  <svg class="ic" style="left:420px;top:10px" width="16" height="16" viewBox="0 0 16 16" fill="#616161"><circle cx="3" cy="8" r="1"/><circle cx="8" cy="8" r="1"/><circle cx="13" cy="8" r="1"/></svg>
  <svg class="ic" style="left:470px;top:10px" width="16" height="16" viewBox="0 0 16 16" fill="none" stroke="#424242" stroke-width="1.100"><circle cx="6.500" cy="6.500" r="5"/><path d="M10.200 10.200L15 15"/></svg>
  <svg class="ic" style="left:496px;top:10px" width="16" height="16" viewBox="0 0 16 16" fill="none" stroke="#424242" stroke-width="1.100"><path d="M1 3.500h14M1 7h14M1 10.500h8M1 14h8M10.500 10.500l4 4M14.500 10.500l-4 4"/></svg>
  <div class="abs" style="left:523px;top:10px;width:1px;height:16px;background:#b5b5b5"></div>
  <svg class="ic" style="left:535px;top:10px" width="16" height="16" viewBox="0 0 16 16" fill="none" stroke="#424242" stroke-width="1.100"><path d="M2 6V2.500h3.500M10.500 2.500H14V6M14 10v3.500h-3.500M5.500 13.500H2V10"/></svg>
  <svg class="ic" style="left:561px;top:10px" width="16" height="16" viewBox="0 0 16 16" fill="none" stroke="#424242" stroke-width="1.100"><path d="M3.800 3.800l8.400 8.400M12.200 3.800l-8.400 8.400"/></svg>
  <div class="abs" style="left:20px;top:45px;width:552px;height:24px;background:#fff;border:1px solid #cecece;border-radius:2px"></div>
  <span class="t" style="left:27px;top:52px;font-size:12px;color:#767676">筛选器(例如 text、!exclude、\escape)</span>
  <div class="abs" style="left:0;top:80px;width:592px;height:231px;overflow:hidden">
  </div>
  <div class="con" style="left:30px;top:70px">debug-1.12.1",</div>
  <div class="con" style="left:76px;top:90px">"registerUseNaturalFormat": true,</div>
  <div class="con" style="left:76px;top:110px">"variableUseNaturalFormat": true,</div>
  <div class="con" style="left:76px;top:130px">"pvtVersion": "1.12.1"</div>
  <div class="con" style="left:61px;top:150px">}</div>
  <div class="con" style="left:46px;top:170px">},</div>
  <div class="con" style="left:46px;top:190px">"event": "custom-continued",</div>
  <div class="con" style="left:46px;top:210px">"body": {</div>
  <div class="con" style="left:61px;top:230px">"threadID": 1,</div>
  <div class="con" style="left:61px;top:250px">"allThreads": true</div>
  <div class="con" style="left:46px;top:270px">}</div>
  <div class="con" style="left:31px;top:290px">}</div>
  
  <div class="abs" style="left:0;top:71px;width:592px;height:8px;background:#fff"></div>
  <div class="abs" style="left:0;top:79px;width:592px;height:4px;background:linear-gradient(#e4e4e4,#e4e4e400)"></div>
  <div class="abs" style="left:0;top:309px;width:592px;height:1px;background:#d0d0d0"></div>
  <svg class="ic" style="left:8px;top:312px" width="16" height="16" viewBox="0 0 16 16" fill="none" stroke="#424242" stroke-width="1.300"><path d="M5.500 3.500L10 8l-4.500 4.500"/></svg>
</div>
<!-- CHAT -->
<div id="chat" class="abs">
  <span class="t" style="left:20px;top:12px;font-size:11px;color:#3b3b3b">聊天</span>
  <div class="abs" style="left:18px;top:28px;width:26px;height:1px;background:#3b3b3b"></div>
  <svg class="ic" style="left:125px;top:10px" width="16" height="16" viewBox="0 0 16 16" fill="none" stroke="#424242" stroke-width="1.100"><path d="M8 1.500v13M1.500 8h13"/></svg>
  <svg class="ic" style="left:152px;top:10px" width="16" height="16" viewBox="0 0 16 16" fill="none" stroke="#424242" stroke-width="1.100"><path d="M2.600 5.200A6.300 6.300 0 1 1 1.700 8.500"/><path d="M1.200 2v3.800H5M8 4.500V8.500l2.700 2"/></svg>
  <svg class="ic" style="left:178px;top:10px" width="16" height="16" viewBox="0 0 16 16" fill="none" stroke="#424242" stroke-width="1" stroke-linejoin="round"><path d="M6.790 2.940 L7.080 1.160 L8.920 1.160 L9.210 2.940 L10.720 3.570 L12.190 2.510 L13.490 3.810 L12.430 5.280 L13.060 6.790 L14.840 7.080 L14.840 8.920 L13.060 9.210 L12.430 10.720 L13.490 12.190 L12.190 13.490 L10.720 12.430 L9.210 13.060 L8.920 14.840 L7.080 14.840 L6.790 13.060 L5.280 12.430 L3.810 13.490 L2.510 12.190 L3.570 10.720 L2.940 9.210 L1.160 8.920 L1.160 7.080 L2.940 6.790 L3.570 5.280 L2.510 3.810 L3.810 2.510 L5.280 3.570Z"/><circle cx="8" cy="8" r="2.300"/></svg>
  <svg class="ic" style="left:204px;top:10px" width="16" height="16" viewBox="0 0 16 16" fill="#424242"><circle cx="3" cy="8" r="1"/><circle cx="8" cy="8" r="1"/><circle cx="13" cy="8" r="1"/></svg>
  <div class="abs" style="left:231px;top:10px;width:1px;height:16px;background:#b5b5b5"></div>
  <svg class="ic" style="left:243px;top:10px" width="16" height="16" viewBox="0 0 16 16" fill="none" stroke="#424242" stroke-width="1.100"><path d="M2 6V2.500h3.500M10.500 2.500H14V6M14 10v3.500h-3.500M5.500 13.500H2V10"/></svg>
  <svg class="ic" style="left:269px;top:10px" width="16" height="16" viewBox="0 0 16 16" fill="none" stroke="#424242" stroke-width="1.100"><path d="M3.800 3.800l8.400 8.400M12.200 3.800l-8.400 8.400"/></svg>
  <svg class="ic" style="left:131px;top:181px" width="40" height="40" viewBox="0 0 40 40" fill="none" stroke="#424242" stroke-width="2.200"><path d="M15.500 6.500H3v24h8v7l8-7h11.500V26"/><path d="M24.500 0l2.200 6.300 6.300 2.200-6.300 2.200-2.200 6.300-2.200-6.300-6.300-2.200 6.300-2.200z M32.500 15l1.500 4 4 1.500-4 1.500-1.500 4-1.500-4-4-1.500 4-1.500z" fill="#424242" stroke="none"/></svg>
  <div class="t" style="left:0;width:300px;top:242px;font-size:24px;color:#616161;text-align:center;text-indent:0">使用代理模式生成。</div>
  <div class="t" style="left:0;width:300px;top:278px;font-size:13px;color:#767676;text-align:center;text-indent:0">AI 答复可能不准确。</div>
  <div class="t" style="left:0;width:300px;top:301px;font-size:13px;color:#767676;text-align:center;text-indent:-2px;letter-spacing:-.2px"><span style="color:#006ab1">生成指令</span> 以将 AI 载入代码库。</div>
  <div class="abs" style="left:16px;top:547px;width:268px;height:92px;background:#fff;border-radius:4px"></div>
  <div class="abs" style="left:23px;top:555px;width:20px;height:18px;border:1px solid #d0d0d0;border-radius:3px"></div>
  <svg class="ic" style="left:27px;top:558px" width="12" height="12" viewBox="0 0 12 12" fill="none" stroke="#424242" stroke-width="1"><path d="M4 4.500v3.800a2 2 0 0 0 4 0V3a1.500 1.500 0 0 0-3 0v5a.5.5 0 0 0 1 0V3.500" stroke-width="1"/><rect x="3.500" y="1" width="5" height="10" rx="2.500"/></svg>
  <div class="abs" style="left:47px;top:555px;width:81px;height:18px;border:1px dashed #cfcfcf;border-radius:3px"></div>
  <span class="t" style="left:56px;top:558px;font-size:12px;font-weight:bold;color:#3c7fb0">C</span>
  <span class="t" style="left:72px;top:559px;font-size:11px;font-style:italic;color:#767676;letter-spacing:-0.1px">main.c</span>
  <svg class="ic" style="left:112px;top:559px" width="10" height="10" viewBox="0 0 10 10" fill="none" stroke="#424242" stroke-width="1"><path d="M5 0v10M0 5h10"/></svg>
  <span class="t" style="left:23px;top:586px;font-size:13px;color:#767676">添加上下文(#)、扩展(@)、命令(/)</span>
  <span class="t" style="left:29px;top:616px;font-size:11px;color:#616161">Agent</span>
  <svg class="ic" style="left:62px;top:617px" width="9" height="9" viewBox="0 0 9 9" fill="none" stroke="#616161" stroke-width="1"><path d="M.5 2.500l4 4 4-4"/></svg>
  <span class="t" style="left:86px;top:616px;font-size:11px;color:#616161;letter-spacing:-0.14px">GPT-5 mini</span>
  <svg class="ic" style="left:145px;top:617px" width="9" height="9" viewBox="0 0 9 9" fill="none" stroke="#616161" stroke-width="1"><path d="M.5 2.500l4 4 4-4"/></svg>
  <svg class="ic" style="left:219px;top:613px" width="16" height="16" viewBox="0 0 16 16" fill="none" stroke="#424242" stroke-width="1.200"><path d="M2 2l4 1 1.500 3.500L14 13l-1.500 1.500L6 8 2.800 6.500z" stroke-width="1"/><path d="M14.500 3.500l-2 2-1.500-.5-.5-1.500 2-2c-2-.7-4.200 1-3.500 3.500L2 12l2 2 7-7c2.500.7 4.200-1.500 3.500-3.500z" stroke-width="1"/></svg>
  <svg class="ic" style="left:245px;top:613px" width="16" height="16" viewBox="0 0 16 16" fill="none" stroke="#424242" stroke-width="1.100"><path d="M1.500 2l13 6-13 6 2-6z M3.500 8h6"/></svg>
  <svg class="ic" style="left:264px;top:617px" width="9" height="9" viewBox="0 0 9 9" fill="none" stroke="#616161" stroke-width="1"><path d="M.5 2.500l4 4 4-4"/></svg>
</div>
<!-- STATUS -->
<div id="status" class="abs">
  <div class="abs" style="left:0;top:0;width:34px;height:22px;background:#16825d"></div>
  <svg class="ic" style="left:11px;top:4px" width="14" height="14" viewBox="0 0 14 14" fill="none" stroke="#fff" stroke-width="1.200"><path d="M1.500 4.300l4.300 4.200-4.300 4.200M10.600 1L6.400 5l4.200 4"/></svg>
  <svg class="ic" style="left:42px;top:4px" width="14" height="14" viewBox="0 0 14 14" fill="none" stroke="#fff" stroke-width="1.300"><circle cx="7" cy="7" r="5.800"/><path d="M4.300 4.300l5.400 5.400M9.700 4.300l-5.400 5.400"/></svg>
  <span class="t" style="left:59px">0</span>
  <svg class="ic" style="left:69px;top:4px" width="14" height="14" viewBox="0 0 14 14" fill="none" stroke="#fff" stroke-width="1.300"><path d="M7 1.300L13 12.500H1z"/><path d="M7 5v4M7 10v1.300"/></svg>
  <span class="t" style="left:87px">0</span>
  <svg class="ic" style="left:95px;top:4px" width="14" height="14" viewBox="0 0 14 14" fill="none" stroke="#fff" stroke-width="1.300"><circle cx="7" cy="7" r="5.800"/><path d="M7 6v4M7 3.800v1.300"/></svg>
  <span class="t" style="left:113px">2</span>
  <svg class="ic" style="left:134px;top:3px" width="16" height="16" viewBox="0 0 16 16" fill="none" stroke="#fff" stroke-width="1.300"><path d="M6 6.500V2l8.500 6L9.500 11.500"/><ellipse cx="4.500" cy="11.500" rx="2.300" ry="3"/><path d="M.5 9.500l1.800 1M8.500 9.500l-1.800 1M.3 12.500h2M8.800 12.500h-2M1 15.200l1.500-1.200M8 15.200L6.500 14" stroke-width=".9"/></svg>
  <span class="t" style="left:154px;letter-spacing:-0.29px">Debug: OpenOCD (EIDE-Project)</span>
  <span class="t" style="left:340px">clangd: idle</span>
  <span class="t" style="left:417px;letter-spacing:-0.18px">Git Graph</span>
  <span class="t" style="left:484px;letter-spacing:-0.35px">EIDE Project: Debug</span>
  <svg class="ic" style="left:605px;top:4px" width="14" height="14" viewBox="0 0 14 14" fill="none" stroke="#fff" stroke-width="1.300"><path d="M1.500 1.500l3.500 1 1.300 3L12.500 12 11 13.500 5 7.500 2.300 6z"/><path d="M12.800 3l-1.800 1.800-1.300-.4-.4-1.300L11 1.200C9.200.6 7.300 2.100 7.900 4.300L1.800 10.500l1.700 1.700 6.200-6.100c2.200.6 3.700-1.300 3.100-3.100z"/></svg>
  <span class="t" style="left:623px;letter-spacing:-0.12px">Build</span>
  <svg class="ic" style="left:666px;top:4px" width="13" height="14" viewBox="0 0 13 14" fill="none" stroke="#fff" stroke-width="1.200"><path d="M6.500 1.500v10.500M2.300 8L6.500 12.200 10.700 8"/></svg>
  <span class="t" style="left:683px;letter-spacing:-0.57px">Flash</span>
  <span class="t" style="left:845px">行 21，列 1</span>
  <span class="t" style="left:923px">空格: 2</span>
  <span class="t" style="left:976px;letter-spacing:-0.56px">UTF-8</span>
  <span class="t" style="left:1023px;letter-spacing:-1.34px">CRLF</span>
  <span class="t" style="left:1066px;letter-spacing:1.500px">{}</span><span class="t" style="left:1085px">C</span>
  <svg class="ic" style="left:1108px;top:4px" width="15" height="14" viewBox="0 0 15 14" fill="none" stroke="#fff" stroke-width="1.700"><circle cx="4.800" cy="4" r="2.500"/><circle cx="10.200" cy="4" r="2.500"/><path d="M2.200 5.500C.8 6.500.8 8.500 1.200 10c1.600 1.800 4 2.600 6.300 2.600s4.700-.8 6.300-2.600c.4-1.500.4-3.500-1-4.500"/><path d="M4 7.500h7" stroke-width="1.300"/><path d="M5.700 8.500v2.200M9.300 8.500v2.200" stroke-width="1.600"/></svg>
  <svg class="ic" style="left:1139px;top:4px" width="14" height="14" viewBox="0 0 14 14" fill="none" stroke="#fff" stroke-width="1.300"><circle cx="7" cy="7" r="5.800"/><path d="M11 3L3 11"/></svg>
  <span class="t" style="left:1157px">Prettier</span>
  <svg class="ic" style="left:1212px;top:4px" width="14" height="14" viewBox="0 0 14 14" fill="none" stroke="#fff" stroke-width="1.300"><path d="M7.500 1.800C4.500 1.500 3 3.500 3 5.800v3L1.500 11h10.200L10.500 8.800V8"/><path d="M5 11.500c.3 1.500 2.700 1.500 3 0"/><circle cx="10.800" cy="3.800" r="2.500" fill="#fff" stroke="none"/></svg>
</div>
<div id="wmk" class="abs" style="left:0;top:0;width:1240px;height:712px;overflow:hidden;z-index:40;pointer-events:none"><div class="wm" style="left:-30px;top:80px">YuanZiHao<br>2026-01-07 16:39:14</div><div class="wm" style="left:290px;top:80px">YuanZiHao<br>2026-01-07 16:39:14</div><div class="wm" style="left:610px;top:80px">YuanZiHao<br>2026-01-07 16:39:14</div><div class="wm" style="left:930px;top:80px">YuanZiHao<br>2026-01-07 16:39:14</div><div class="wm" style="left:-30px;top:381.5px">YuanZiHao<br>2026-01-07 16:39:14</div><div class="wm" style="left:290px;top:381.5px">YuanZiHao<br>2026-01-07 16:39:14</div><div class="wm" style="left:610px;top:381.5px">YuanZiHao<br>2026-01-07 16:39:14</div><div class="wm" style="left:930px;top:381.5px">YuanZiHao<br>2026-01-07 16:39:14</div><div class="wm" style="left:-30px;top:683px">YuanZiHao<br>2026-01-07 16:39:14</div><div class="wm" style="left:290px;top:683px">YuanZiHao<br>2026-01-07 16:39:14</div><div class="wm" style="left:610px;top:683px">YuanZiHao<br>2026-01-07 16:39:14</div><div class="wm" style="left:930px;top:683px">YuanZiHao<br>2026-01-07 16:39:14</div></div>
</div>
<div id="winborder"></div>
</body>
</html>
